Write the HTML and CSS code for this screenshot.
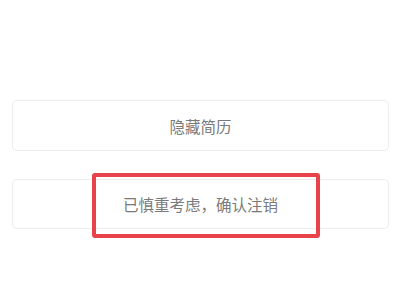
FILE: index.html
```html
<!DOCTYPE html>
<html lang="zh">
<head>
<meta charset="utf-8">
<link rel="stylesheet" href="styles.css">
</head>
<body>
<div class="page">
  <div class="actions">
    <div class="card">隐藏简历</div>
    <div class="card confirm">
      <span>已慎重考虑，确认注销</span>
      <div class="highlight"></div>
    </div>
  </div>
</div>
</body>
</html>
```

FILE: styles.css
```css
html, body {
  margin: 0;
  padding: 0;
  background: #ffffff;
}
.page {
  width: 400px;
  height: 300px;
  box-sizing: border-box;
  padding: 100px 11px 0 12px;
  font-family: "Noto Sans CJK SC", "Noto Sans", sans-serif;
}
.actions {
  display: flex;
  flex-direction: column;
  gap: 28px;
}
.card {
  height: 51px;
  box-sizing: border-box;
  border: 1px solid #ececec;
  border-radius: 5px;
  display: flex;
  align-items: center;
  justify-content: center;
  color: #7a7a7a;
  font-size: 15.5px;
  letter-spacing: 0;
}
.confirm {
  position: relative;
  height: 50px;
}
.highlight {
  position: absolute;
  left: 79px;
  top: -7px;
  width: 228px;
  height: 65px;
  box-sizing: border-box;
  border: 4px solid #e8434b;
  border-radius: 3px;
}
```
